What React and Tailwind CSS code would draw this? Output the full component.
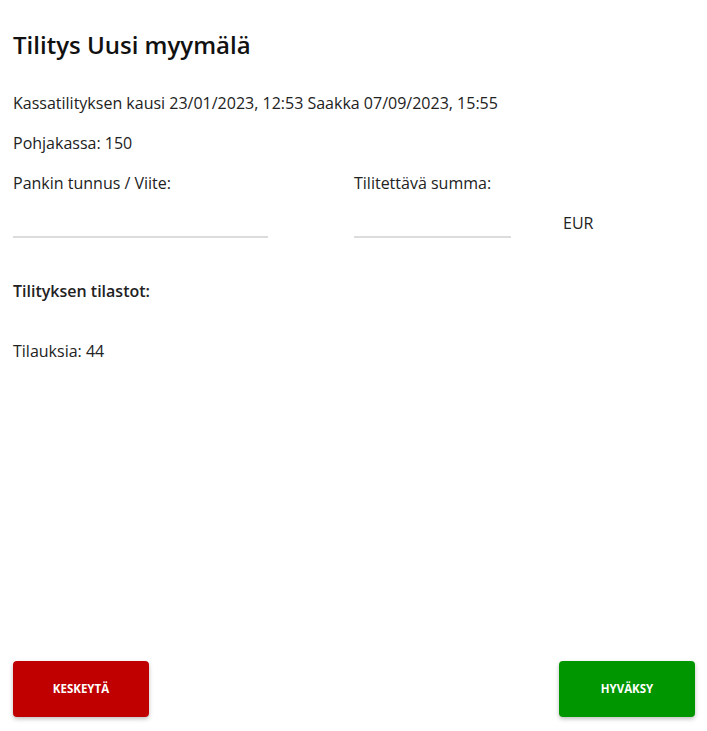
export default function App() {
  return (
    <div className="flex h-[731px] flex-col justify-between px-[13px] pb-[14px] pr-[12px] text-[#222] font-['Open_Sans',sans-serif]">
      <div>
        <h1 className="pt-[29px] text-[24px] font-semibold leading-[32px] text-[#111]">Tilitys Uusi myymälä</h1>
        <p className="mt-[30px] text-[16px] leading-[24px]">Kassatilityksen kausi 23/01/2023, 12:53 Saakka 07/09/2023, 15:55</p>
        <p className="mt-[16px] text-[16px] leading-[24px]">Pohjakassa: 150</p>
        <div className="mt-[16px] flex text-[16px] leading-[24px]">
          <div className="w-[341px]">
            <div>Pankin tunnus / Viite:</div>
            <div className="mt-[41px] h-[2px] w-[255px] bg-[#dcdcdc]"></div>
          </div>
          <div className="flex items-end">
            <div>
              <div>Tilitettävä summa:</div>
              <div className="mt-[41px] h-[2px] w-[157px] bg-[#dcdcdc]"></div>
            </div>
            <div className="ml-[52px] mb-[3px]">EUR</div>
          </div>
        </div>
        <p className="mt-[41px] text-[16px] font-semibold leading-[24px]">Tilityksen tilastot:</p>
        <p className="mt-[36px] text-[16px] leading-[24px]">Tilauksia: 44</p>
      </div>
      <div className="flex justify-between">
        <button className="h-[56px] w-[136px] rounded-[4px] bg-[#c00000] text-[11.5px] font-bold text-white shadow-[0_2px_4px_rgba(0,0,0,0.25)]">KESKEYTÄ</button>
        <button className="h-[56px] w-[136px] rounded-[4px] bg-[#009600] text-[11.5px] font-bold text-white shadow-[0_2px_4px_rgba(0,0,0,0.25)]">HYVÄKSY</button>
      </div>
    </div>
  );
}
